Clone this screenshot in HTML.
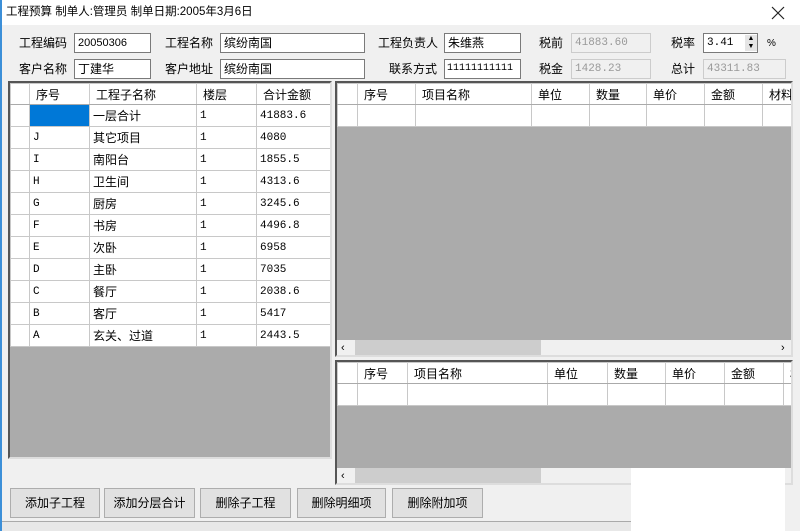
<!DOCTYPE html>
<html><head><meta charset="utf-8"><style>
*{box-sizing:border-box;margin:0;padding:0}
body{width:800px;height:531px;overflow:hidden;background:#f0f0f0;font-family:"Liberation Sans","Noto Sans CJK SC",sans-serif;font-size:12px;color:#000;position:relative}
.a{position:absolute}
.title{left:0;top:0;width:800px;height:25px;background:#fff}
.lbl{font-size:12px;line-height:14px}
.in{background:#fff;border:1px solid #7a7a7a;height:20px;padding:1px 3px;font-size:12px;line-height:16px;overflow:hidden;white-space:nowrap}
.dis{background:#f0f0f0;border:1px solid #ccc;color:#999;font-family:"Liberation Mono",monospace;font-size:11px}
.grid{background:#ababab;border:2px solid #555;border-right-color:#ddd;border-bottom-color:#ddd;overflow:hidden}
table{border-collapse:collapse;position:absolute;left:0;top:0;table-layout:fixed}
td{border:1px solid #c8c8c8;height:22px;padding:0 3px;font-size:12px;white-space:nowrap;overflow:hidden;background:#fff}
td.m{font-family:"Liberation Mono",monospace;font-size:11px}
tr.h td{background:#fff;border-color:#c8c8c8 #ccc #aaa #ccc;height:21px;padding-left:6px}
.btn{background:#e1e1e1;border:1px solid #adadad;text-align:center;line-height:28px;height:30px;font-size:12px}
.sb{background:#f0f0f0;height:17px}
.thumb{background:#cdcdcd;height:17px}
</style></head><body>
<div class="a title"></div>
<div class="a" style="left:0;top:0;width:2px;height:531px;background:#3c8fd8"></div>
<div class="a lbl" style="left:6px;top:5px;font-size:11.5px">工程预算 制单人:管理员 制单日期:2005年3月6日</div>
<svg class="a" style="left:771px;top:6px" width="14" height="14" viewBox="0 0 14 14"><path d="M1 1L13 13M13 1L1 13" stroke="#222" stroke-width="1.2"/></svg>

<div class="a lbl" style="left:19px;top:36px">工程编码</div>
<div class="a in" style="left:74px;top:33px;width:77px;font-size:11px">20050306</div>
<div class="a lbl" style="left:165px;top:36px">工程名称</div>
<div class="a in" style="left:220px;top:33px;width:145px">缤纷南国</div>
<div class="a lbl" style="left:378px;top:36px">工程负责人</div>
<div class="a in" style="left:444px;top:33px;width:77px">朱维燕</div>
<div class="a lbl" style="left:539px;top:36px">税前</div>
<div class="a in dis" style="left:571px;top:33px;width:80px">41883.60</div>
<div class="a lbl" style="left:671px;top:36px">税率</div>
<div class="a in" style="left:703px;top:33px;width:55px;font-family:'Liberation Mono',monospace;font-size:11px">3.41</div>
<div class="a" style="left:745px;top:35px;width:12px;height:16px;background:#e5e5e5;font-size:7px;line-height:8px;text-align:center">▲<br>▼</div>
<div class="a" style="left:767px;top:38px;font-size:10px">%</div>

<div class="a lbl" style="left:19px;top:62px">客户名称</div>
<div class="a in" style="left:74px;top:59px;width:77px">丁建华</div>
<div class="a lbl" style="left:165px;top:62px">客户地址</div>
<div class="a in" style="left:220px;top:59px;width:145px">缤纷南国</div>
<div class="a lbl" style="left:389px;top:62px">联系方式</div>
<div class="a in" style="left:444px;top:59px;width:77px;font-family:'Liberation Mono',monospace;font-size:10px;padding-left:2px">11111111111</div>
<div class="a lbl" style="left:539px;top:62px">税金</div>
<div class="a in dis" style="left:571px;top:59px;width:80px">1428.23</div>
<div class="a lbl" style="left:671px;top:62px">总计</div>
<div class="a in dis" style="left:703px;top:59px;width:83px">43311.83</div>

<div class="a grid" style="left:8px;top:81px;width:324px;height:378px">
<table style="width:322px">
<colgroup><col style="width:19px"><col style="width:60px"><col style="width:107px"><col style="width:60px"><col style="width:76px"></colgroup>
<tr class="h"><td></td><td>序号</td><td>工程子名称</td><td>楼层</td><td>合计金额</td></tr>
<tr><td></td><td style="background:#0078d7"></td><td>一层合计</td><td class="m">1</td><td class="m">41883.6</td></tr>
<tr><td></td><td class="m">J</td><td>其它项目</td><td class="m">1</td><td class="m">4080</td></tr>
<tr><td></td><td class="m">I</td><td>南阳台</td><td class="m">1</td><td class="m">1855.5</td></tr>
<tr><td></td><td class="m">H</td><td>卫生间</td><td class="m">1</td><td class="m">4313.6</td></tr>
<tr><td></td><td class="m">G</td><td>厨房</td><td class="m">1</td><td class="m">3245.6</td></tr>
<tr><td></td><td class="m">F</td><td>书房</td><td class="m">1</td><td class="m">4496.8</td></tr>
<tr><td></td><td class="m">E</td><td>次卧</td><td class="m">1</td><td class="m">6958</td></tr>
<tr><td></td><td class="m">D</td><td>主卧</td><td class="m">1</td><td class="m">7035</td></tr>
<tr><td></td><td class="m">C</td><td>餐厅</td><td class="m">1</td><td class="m">2038.6</td></tr>
<tr><td></td><td class="m">B</td><td>客厅</td><td class="m">1</td><td class="m">5417</td></tr>
<tr><td></td><td class="m">A</td><td>玄关、过道</td><td class="m">1</td><td class="m">2443.5</td></tr>
</table></div>

<div class="a grid" style="left:335px;top:81px;width:458px;height:276px">
<table style="width:480px">
<colgroup><col style="width:20px"><col style="width:58px"><col style="width:116px"><col style="width:58px"><col style="width:57px"><col style="width:58px"><col style="width:58px"><col style="width:55px"></colgroup>
<tr class="h"><td></td><td>序号</td><td>项目名称</td><td>单位</td><td>数量</td><td>单价</td><td>金额</td><td>材料</td></tr>
<tr><td></td><td></td><td></td><td></td><td></td><td></td><td></td><td></td></tr>
</table>
<div class="a sb" style="left:0;top:257px;width:456px"></div>
<div class="a thumb" style="left:18px;top:257px;width:186px"></div>
<div class="a" style="left:4px;top:257px;font-size:11px;line-height:17px">‹</div>
<div class="a" style="left:444px;top:257px;font-size:11px;line-height:17px">›</div>
</div>

<div class="a grid" style="left:335px;top:360px;width:458px;height:125px">
<table style="width:480px">
<colgroup><col style="width:20px"><col style="width:50px"><col style="width:140px"><col style="width:60px"><col style="width:58px"><col style="width:59px"><col style="width:59px"><col style="width:34px"></colgroup>
<tr class="h"><td></td><td>序号</td><td>项目名称</td><td>单位</td><td>数量</td><td>单价</td><td>金额</td><td>材</td></tr>
<tr><td></td><td></td><td></td><td></td><td></td><td></td><td></td><td></td></tr>
</table>
<div class="a sb" style="left:0;top:106px;width:456px"></div>
<div class="a thumb" style="left:18px;top:106px;width:186px"></div>
<div class="a" style="left:4px;top:106px;font-size:11px;line-height:17px">‹</div>
</div>
<div class="a" style="left:631px;top:468px;width:154px;height:63px;background:#fff"></div>

<div class="a btn" style="left:10px;top:488px;width:90px">添加子工程</div>
<div class="a btn" style="left:104px;top:488px;width:91px">添加分层合计</div>
<div class="a btn" style="left:200px;top:488px;width:91px">删除子工程</div>
<div class="a btn" style="left:297px;top:488px;width:89px">删除明细项</div>
<div class="a btn" style="left:392px;top:488px;width:91px">删除附加项</div>
<div class="a" style="left:2px;top:521px;width:629px;height:10px;background:#e8e8e8;border-top:1px solid #aaa"></div>
</body></html>
